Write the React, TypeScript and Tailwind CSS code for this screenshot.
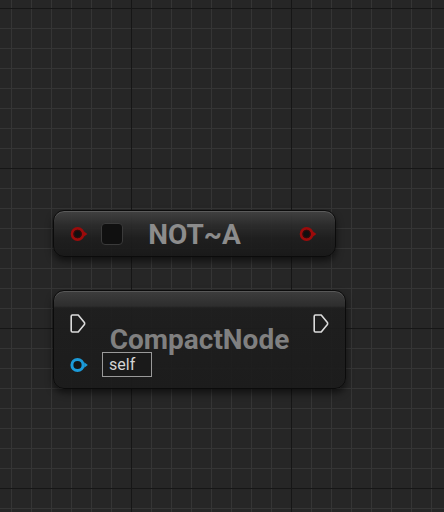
import React from 'react';

function BoolPin() {
  return (
    <svg width="18" height="16" viewBox="0 0 18 16" className="shrink-0">
      <circle cx="7.6" cy="8" r="5.6" fill="#161616" stroke="#9c0b0b" strokeWidth="2.6" />
      <circle cx="7.6" cy="8" r="3.6" fill="#101010" stroke="#420606" strokeWidth="0.8" />
      <path d="M13.8 5.3 L17.4 8 L13.8 10.7 Z" fill="#9c0b0b" />
    </svg>
  );
}

function ObjectPin() {
  return (
    <svg width="19" height="16" viewBox="0 0 19 16" className="shrink-0">
      <circle cx="7.5" cy="8" r="5.6" fill="#141414" stroke="#1b9ad8" strokeWidth="3" />
      <path d="M14.2 5.3 L17.8 8 L14.2 10.7 Z" fill="#1b9ad8" />
    </svg>
  );
}

function ExecPin() {
  return (
    <svg width="16" height="19" viewBox="0 0 16 19" className="shrink-0">
      <path
        d="M1.2 2.2 Q1.2 1 2.4 1 H8.2 L14.4 8.4 Q14.9 9.5 14.4 10.6 L8.2 18 H2.4 Q1.2 18 1.2 16.8 Z"
        fill="none"
        stroke="#dcdcdc"
        strokeWidth="1.6"
        strokeLinejoin="round"
      />
    </svg>
  );
}

export default function App() {
  return (
    <div className="relative w-[444px] h-[512px] overflow-hidden bg-[#262626] bg-[linear-gradient(to_right,#161616_1px,transparent_1px),linear-gradient(to_bottom,#161616_1px,transparent_1px),linear-gradient(to_right,#353535_1px,transparent_1px),linear-gradient(to_bottom,#353535_1px,transparent_1px)] [background-size:160px_160px,160px_160px,20px_20px,20px_20px] [background-position:131px_8px,131px_8px,11px_8px,11px_8px]">
      {/* NOT~A node */}
      <div className="absolute left-[53px] top-[210px] w-[283px] h-[47px] grid rounded-[11px] border border-[#0b0b0b] bg-[linear-gradient(to_bottom,rgba(66,66,66,0.95)_0px,rgba(44,44,44,0.9)_14px,rgba(30,30,30,0.9)_60%,rgba(24,24,24,0.9)_100%)] shadow-[inset_0_1px_0_rgba(255,255,255,0.14),0_4px_7px_rgba(0,0,0,0.55)]">
        <div className="[grid-area:1/1] flex items-center pl-[16px] pr-[18px]">
          <BoolPin />
          <div className="ml-[13px] w-[22px] h-[22px] rounded-[4px] bg-[#101010] border border-[#3a3a3a]" />
          <div className="flex-1" />
          <BoolPin />
        </div>
        <div className="[grid-area:1/1] flex justify-center pt-[10px] font-['Roboto',sans-serif] font-bold text-[28px] leading-[28px] text-[#8c8c8c]">
          NOT~A
        </div>
      </div>

      {/* CompactNode */}
      <div className="absolute left-[53px] top-[290px] w-[293px] h-[99px] grid rounded-[11px] border border-[#0b0b0b] bg-[linear-gradient(to_bottom,rgba(62,62,62,0.96)_0px,rgba(46,46,46,0.94)_15px,rgba(30,30,30,0.92)_17px,rgba(27,27,27,0.9)_100%)] shadow-[inset_0_1px_0_rgba(255,255,255,0.14),0_4px_7px_rgba(0,0,0,0.55)]">
        <div className="[grid-area:1/1] flex justify-between pl-[16px] pr-[16px] pt-[23px]">
          <div className="flex flex-col">
            <ExecPin />
            <div className="mt-[19px] flex items-center gap-[13px]">
              <ObjectPin />
              <div className="w-[50px] h-[25px] border border-[#9a9a9a] bg-[#1a1a1a] pl-[6px] flex items-center font-['Roboto',sans-serif] text-[16px] leading-none text-[#d4d4d4]">
                self
              </div>
            </div>
          </div>
          <div>
            <ExecPin />
          </div>
        </div>
        <div className="[grid-area:1/1] flex justify-center pt-[35px] font-['Roboto',sans-serif] font-bold text-[28px] leading-[28px] text-[#808080]">
          CompactNode
        </div>
      </div>
    </div>
  );
}
